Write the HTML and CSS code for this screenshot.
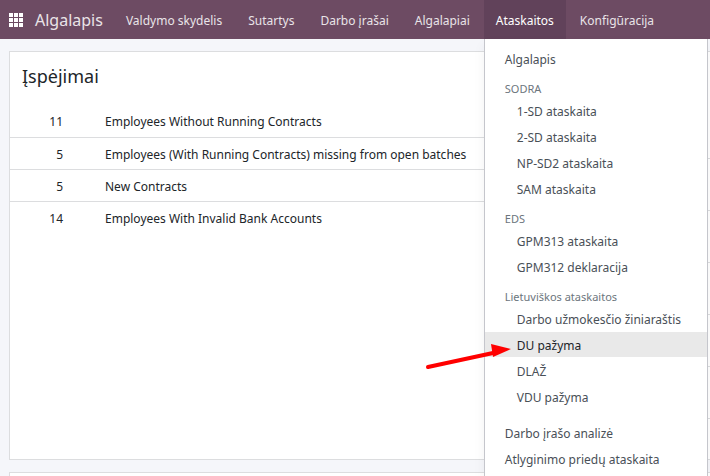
FILE: index.html
```html
<!DOCTYPE html>
<html lang="lt">
<head>
<meta charset="utf-8">
<meta name="viewport" content="width=device-width, initial-scale=1">
<title>Algalapis</title>
<link rel="stylesheet" href="styles.css">
</head>
<body>
<header class="navbar">
  <button class="apps" type="button" aria-label="Programos">
    <svg width="14" height="14" viewBox="0 0 14 14" fill="currentColor" aria-hidden="true">
      <path d="M0 0h4v4H0zM5 0h4v4H5zM10 0h4v4h-4zM0 5h4v4H0zM5 5h4v4H5zM10 5h4v4h-4zM0 10h4v4H0zM5 10h4v4H5zM10 10h4v4h-4z"/>
    </svg>
  </button>
  <a class="brand" href="#">Algalapis</a>
  <nav class="sections">
    <a class="section" href="#">Valdymo skydelis</a>
    <a class="section" href="#">Sutartys</a>
    <a class="section" href="#">Darbo įrašai</a>
    <a class="section" href="#">Algalapiai</a>
    <div class="dropdown">
      <button class="section open" type="button" aria-expanded="true">Ataskaitos</button>
      <div class="menu">
        <a class="item" href="#">Algalapis</a>
        <div class="group">SODRA</div>
        <a class="item sub" href="#">1-SD ataskaita</a>
        <a class="item sub" href="#">2-SD ataskaita</a>
        <a class="item sub" href="#">NP-SD2 ataskaita</a>
        <a class="item sub" href="#">SAM ataskaita</a>
        <div class="group">EDS</div>
        <a class="item sub" href="#">GPM313 ataskaita</a>
        <a class="item sub" href="#">GPM312 deklaracija</a>
        <div class="group">Lietuviškos ataskaitos</div>
        <a class="item sub" href="#">Darbo užmokesčio žiniaraštis</a>
        <a class="item sub active" href="#">DU pažyma
          <svg class="pointer" width="87" height="26" viewBox="0 0 87 26" aria-hidden="true">
            <path d="M3 23L68 9" stroke="#f00" stroke-width="4" stroke-linecap="round"/>
            <path d="M66 0L86 5L68 13Z" fill="#f00"/>
          </svg>
        </a>
        <a class="item sub" href="#">DLAŽ</a>
        <a class="item sub" href="#">VDU pažyma</a>
        <a class="item after-group" href="#">Darbo įrašo analizė</a>
        <a class="item" href="#">Atlyginimo priedų ataskaita</a>
      </div>
    </div>
    <a class="section" href="#">Konfigūracija</a>
  </nav>
</header>
<main class="dashboard">
  <section class="card">
    <h1 class="title">Įspėjimai</h1>
    <table class="list">
      <tr><td class="count">11</td><td>Employees Without Running Contracts</td></tr>
      <tr><td class="count">5</td><td>Employees (With Running Contracts) missing from open batches</td></tr>
      <tr><td class="count">5</td><td>New Contracts</td></tr>
      <tr><td class="count">14</td><td>Employees With Invalid Bank Accounts</td></tr>
    </table>
  </section>
  <section class="card side batches">
    <div class="line"></div>
    <div class="line"></div>
    <div class="line"></div>
    <div class="line"></div>
    <div class="line"></div>
    <div class="line"></div>
  </section>
  <section class="card next"></section>
  <section class="card side next"></section>
</main>
</body>
</html>
```
FILE: styles.css
```css
* {
  box-sizing: border-box;
}

html {
  height: 100%;
}

body {
  margin: 0;
  height: 100%;
  overflow: hidden;
  display: flex;
  flex-direction: column;
  background: #f5f6fa;
  color: #212529;
  font-family: "Noto Sans", "Segoe UI", sans-serif;
  font-size: 12px;
}

a {
  color: inherit;
  text-decoration: none;
}

button {
  border: 0;
  background: none;
  color: inherit;
  font: inherit;
  cursor: pointer;
}

.navbar {
  flex: none;
  display: flex;
  align-items: stretch;
  height: 39px;
  background: #6d4b63;
  color: #e9e4e8;
}

.apps {
  display: flex;
  align-items: center;
  padding: 0 12px 0 9px;
  color: #fff;
}

.brand {
  display: flex;
  align-items: center;
  padding-right: 11px;
  font-size: 16px;
}

.sections {
  display: flex;
  gap: 2px;
}

.section {
  display: flex;
  align-items: center;
  height: 39px;
  padding: 2px 12px 0;
  white-space: nowrap;
}

.section.open {
  background: #61425a;
  color: #fff;
}

.dropdown {
  position: relative;
}

.menu {
  position: absolute;
  top: 39px;
  left: 0;
  z-index: 10;
  display: flex;
  flex-direction: column;
  gap: 1px;
  width: 224px;
  padding: 7px 0 5px;
  border: solid #c5c6cc;
  border-width: 0 1px;
  background: #fff;
  color: #495057;
  box-shadow: 0 6px 12px rgba(0, 0, 0, 0.05);
}

.item {
  position: relative;
  padding: 2px 20px 0;
  line-height: 23px;
  white-space: nowrap;
}

.sub {
  padding-left: 32px;
}

.active {
  background: #e9e9e9;
  color: #212529;
}

.group {
  margin-top: 7px;
  padding: 2px 20px 0;
  color: #6c757d;
  font-size: 11px;
  line-height: 16px;
}

.after-group {
  margin-top: 10px;
}

.pointer {
  position: absolute;
  top: 12px;
  right: 100%;
  margin-right: -27px;
}

.dashboard {
  flex: 1;
  display: grid;
  grid-template-columns: 3fr 1fr;
  grid-template-rows: 409px 1fr;
  gap: 12px;
  padding: 12px 0 0 9px;
}

.card {
  border: 1px solid #dcdddf;
  background: #fff;
}

.side {
  border-right: 0;
}

.next {
  border-bottom: 0;
}

.title {
  margin: 0;
  padding: 10px 12px 15px;
  font-size: 18px;
  font-weight: 400;
  line-height: 28px;
}

.list {
  width: 100%;
  border-collapse: collapse;
}

.list td {
  height: 32px;
  padding: 2px 0 0;
  border-bottom: 1px solid #dcdddf;
  white-space: nowrap;
}

.list tr:last-child td {
  border-bottom: 0;
}

.list .count {
  width: 95px;
  padding-right: 42px;
  text-align: right;
}

.batches {
  padding-top: 55px;
}

.line {
  height: 52px;
  border-bottom: 1px solid #dcdddf;
}
```
